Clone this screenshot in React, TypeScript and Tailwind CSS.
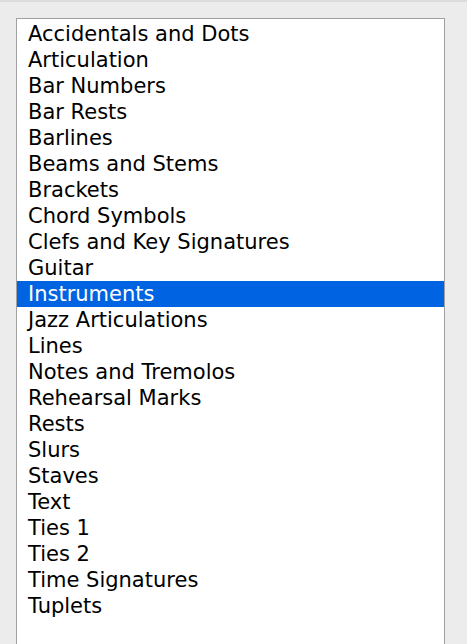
import React from "react";

const items = [
  "Accidentals and Dots",
  "Articulation",
  "Bar Numbers",
  "Bar Rests",
  "Barlines",
  "Beams and Stems",
  "Brackets",
  "Chord Symbols",
  "Clefs and Key Signatures",
  "Guitar",
  "Instruments",
  "Jazz Articulations",
  "Lines",
  "Notes and Tremolos",
  "Rehearsal Marks",
  "Rests",
  "Slurs",
  "Staves",
  "Text",
  "Ties 1",
  "Ties 2",
  "Time Signatures",
  "Tuplets",
];

export default function App() {
  return (
    <div className="w-[467px] h-[644px] bg-[#ececec] border-t-2 border-[#dcdcdc] overflow-hidden" style={{ fontFamily: '"DejaVu Sans", sans-serif' }}>
      <div className="ml-[16px] mt-[16px] w-[429px] h-[640px] bg-white border border-[#a0a0a0] pt-[2px]">
        {items.map((it) => (
          <div
            key={it}
            className={`h-[26px] leading-[26px] pl-[11px] text-[21px] ${it === "Instruments" ? "bg-[#0063e1] text-white" : "text-black"}`}
          >
            {it}
          </div>
        ))}
      </div>
    </div>
  );
}
